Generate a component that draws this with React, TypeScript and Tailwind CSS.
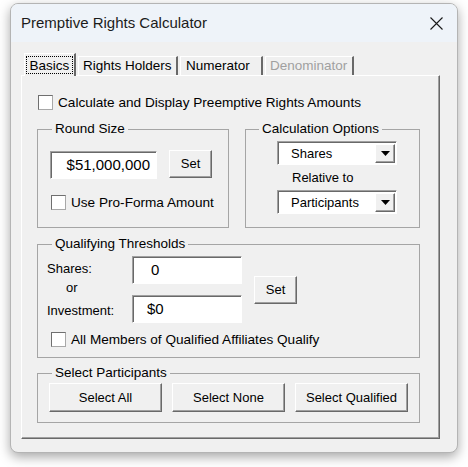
import React from 'react';

const raised =
  'bg-[#f0f0f0] border border-t-white border-l-white border-r-[#696969] border-b-[#696969] shadow-[inset_-1px_-1px_0_#a0a0a0]';
const sunken =
  'bg-white border border-t-[#a0a0a0] border-l-[#a0a0a0] border-r-white border-b-white shadow-[inset_1px_1px_0_#696969]';

const CheckBox: React.FC<{ label: string; className?: string }> = ({ label, className = '' }) => (
  <div className={`flex items-center gap-[5px] h-[15px] ${className}`}>
    <span className="w-[15px] h-[15px] bg-white border border-[#a8a8a8] border-t-[#6f6f6f] border-l-[#6f6f6f]" />
    <span className="text-[13.6px] leading-[15px]">{label}</span>
  </div>
);

const Button: React.FC<{ label: string; className?: string }> = ({ label, className = '' }) => (
  <div className={`${raised} flex items-center justify-center text-[13px] ${className}`}>{label}</div>
);

const Combo: React.FC<{ value: string }> = ({ value }) => (
  <div className={`${sunken} w-[120px] h-[24px] flex items-center justify-between pl-[13px] pr-px`}>
    <span className="text-[13px] leading-[15px]">{value}</span>
    <span className={`${raised} w-[20px] h-[19px] flex items-center justify-center`}>
      <svg width="9" height="5" viewBox="0 0 9 5">
        <polygon points="0,0 9,0 4.5,5" fill="#000" />
      </svg>
    </span>
  </div>
);

const Group: React.FC<{ title: string; className?: string; legendMl?: string; children: React.ReactNode }> = ({
  title,
  className = '',
  legendMl = 'ml-[14px]',
  children,
}) => (
  <fieldset className={`border border-[#a5a5a5] ${className}`}>
    <legend className={`${legendMl} px-[3px] text-[13.5px] leading-[16px]`}>{title}</legend>
    {children}
  </fieldset>
);

export default function App() {
  return (
    <div className="w-[468px] h-[467px] bg-white pt-[3px] pl-[10px] font-['Liberation_Sans',Arial,sans-serif] text-black">
      <div className="w-[448px] h-[450px] rounded-[8px] border border-[#b4b4b4] overflow-hidden flex flex-col bg-[#f0f0f0] shadow-[0_4px_12px_rgba(0,0,0,0.35)]">
        {/* title bar */}
        <div className="h-[38px] bg-[#eef3f9] flex items-center justify-between pl-[10px] pr-[14px]">
          <span className="text-[15px] text-[#1b1b1b]">Premptive Rights Calculator</span>
          <svg width="13" height="13" viewBox="0 0 13 13">
            <path d="M0.5 0.5 L12.5 12.5 M12.5 0.5 L0.5 12.5" stroke="#1a1a1a" strokeWidth="1.1" />
          </svg>
        </div>

        <div className="pl-[10px] pt-[11px]">
          {/* tabs */}
          <div className="flex items-end pl-[3px] h-[22px] text-[13.5px]">
            <div className="relative z-10 -mb-px w-[52px] h-[23px] bg-[#f0f0f0] border-t border-l border-t-white border-l-white border-r-2 border-r-[#696969] flex items-center px-[1px]">
              <span className="w-full h-[18px] border border-dotted border-black flex items-center justify-center leading-[15px]">
                Basics
              </span>
            </div>
            <div className="ml-[2px] w-[100px] h-[19px] border-t border-l border-t-white border-l-white border-r-2 border-r-[#696969] flex items-center pl-[4px]">
              Rights Holders
            </div>
            <div className="ml-[2px] w-[83px] h-[19px] border-t border-l border-t-white border-l-white border-r-2 border-r-[#696969] flex items-center pl-[5px]">
              Numerator
            </div>
            <div className="ml-[2px] w-[89px] h-[19px] border-t border-l border-t-white border-l-white border-r-2 border-r-[#696969] flex items-center pl-[4px] text-[#a0a0a0]">
              Denominator
            </div>
          </div>

          {/* tab page */}
          <div className="w-[419px] h-[364px] border border-t-white border-l-white border-r-[#696969] border-b-[#696969] shadow-[inset_-1px_-1px_0_#a0a0a0] flex flex-col pl-[15px]">
            <CheckBox label="Calculate and Display Preemptive Rights Amounts" className="mt-[19px] ml-px" />

            <div className="flex gap-[16px] mt-[11px]">
              <Group title="Round Size" className="w-[192px] h-[107px]">
                <div className="flex items-start gap-[12px] pl-[12px] mt-[14px]">
                  <div className={`${sunken} w-[107px] h-[28px] flex items-center justify-end pr-[6px] text-[15px]`}>
                    $51,000,000
                  </div>
                  <Button label="Set" className="w-[43px] h-[28px] -mt-px" />
                </div>
                <CheckBox label="Use Pro-Forma Amount" className="mt-[16px] ml-[13px] gap-[4px]" />
              </Group>

              <Group title="Calculation Options" className="w-[175px] h-[107px]" legendMl="ml-[13px]">
                <div className="flex flex-col items-start pl-[31px] mt-[4px]">
                  <Combo value="Shares" />
                  <span className="text-[13px] leading-[15px] my-[5px] ml-[15px]">Relative to</span>
                  <Combo value="Participants" />
                </div>
              </Group>
            </div>

            <Group title="Qualifying Thresholds" className="w-[383px] h-[122px] mt-[8px]">
              <div className="flex items-center pl-[9px] mt-[4px]">
                <div className="w-[85px] flex flex-col text-[13px] leading-[15px]">
                  <span>Shares:</span>
                  <span className="ml-[19px] mt-[4px]">or</span>
                  <span className="mt-[8px]">Investment:</span>
                </div>
                <div className="flex flex-col gap-[11px]">
                  <div className={`${sunken} w-[110px] h-[28px] flex items-center pl-[18px] text-[15px]`}>0</div>
                  <div className={`${sunken} w-[110px] h-[28px] flex items-center pl-[14px] text-[15px]`}>$0</div>
                </div>
                <Button label="Set" className="w-[43px] h-[28px] ml-[12px]" />
              </div>
              <CheckBox label="All Members of Qualified Affiliates Qualify" className="mt-[9px] ml-[13px] gap-[4px]" />
            </Group>

            <Group title="Select Participants" className="w-[383px] h-[58px] mt-[7px]">
              <div className="flex gap-[10px] pl-[11px] mt-[2px]">
                <Button label="Select All" className="w-[113px] h-[29px]" />
                <Button label="Select None" className="w-[113px] h-[29px]" />
                <Button label="Select Qualified" className="w-[113px] h-[29px]" />
              </div>
            </Group>
          </div>
        </div>
      </div>
    </div>
  );
}
